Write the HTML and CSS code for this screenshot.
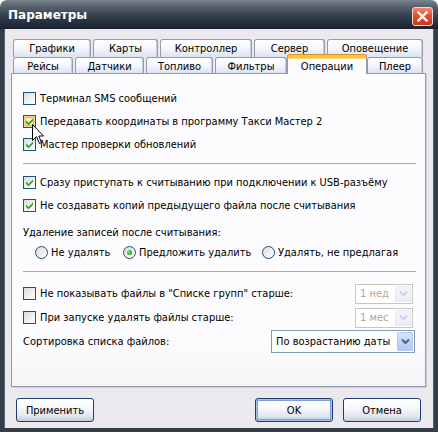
FILE: index.html
```html
<!DOCTYPE html>
<html>
<head>
<meta charset="utf-8">
<link rel="stylesheet" href="styles.css">
</head>
<body>
<div class="window">
  <div class="titlebar">
    <span class="title">Параметры</span>
    <div class="close">
      <svg width="11" height="11" viewBox="0 0 11 11"><path d="M1.5 1.5 L9.5 9.5 M9.5 1.5 L1.5 9.5" stroke="#fff" stroke-width="2.4" stroke-linecap="square"/></svg>
    </div>
  </div>
  <div class="client">
    <div class="tabs">
      <div class="tabrow back">
        <div class="tab t1">Графики</div>
        <div class="tab t2">Карты</div>
        <div class="tab t3">Контроллер</div>
        <div class="tab t4">Сервер</div>
        <div class="tab t5">Оповещение</div>
      </div>
      <div class="tabrow front">
        <div class="tab f1">Рейсы</div>
        <div class="tab f2">Датчики</div>
        <div class="tab f3">Топливо</div>
        <div class="tab f4">Фильтры</div>
        <div class="tab f5 selected">Операции</div>
        <div class="tab f6">Плеер</div>
      </div>
    </div>
    <div class="panel">
      <div class="row first"><span class="cb"></span><span class="lbl">Терминал SMS сообщений</span></div>
      <div class="row"><span class="cb checked hover"><svg width="9" height="9" viewBox="0 0 9 9"><path d="M1 3.5 L3.5 6 L8 1.5 L8 3.8 L3.5 8.2 L1 5.7 Z" fill="#21a121"/></svg></span><span class="lbl">Передавать координаты в программу Такси Мастер 2</span></div>
      <div class="row"><span class="cb checked"><svg width="9" height="9" viewBox="0 0 9 9"><path d="M1 3.5 L3.5 6 L8 1.5 L8 3.8 L3.5 8.2 L1 5.7 Z" fill="#21a121"/></svg></span><span class="lbl">Мастер проверки обновлений</span></div>
      <div class="sep s1"></div>
      <div class="row r4"><span class="cb checked"><svg width="9" height="9" viewBox="0 0 9 9"><path d="M1 3.5 L3.5 6 L8 1.5 L8 3.8 L3.5 8.2 L1 5.7 Z" fill="#21a121"/></svg></span><span class="lbl">Сразу приступать к считыванию при подключении к USB-разъёму</span></div>
      <div class="row"><span class="cb checked"><svg width="9" height="9" viewBox="0 0 9 9"><path d="M1 3.5 L3.5 6 L8 1.5 L8 3.8 L3.5 8.2 L1 5.7 Z" fill="#21a121"/></svg></span><span class="lbl">Не создавать копий предыдущего файла после считывания</span></div>
      <div class="label-row">Удаление записей после считывания:</div>
      <div class="radio-row">
        <div class="ropt o1"><span class="rb"></span><span class="lbl">Не удалять</span></div>
        <div class="ropt o2"><span class="rb on"><span class="dot"></span></span><span class="lbl">Предложить удалить</span></div>
        <div class="ropt o3"><span class="rb"></span><span class="lbl">Удалять, не предлагая</span></div>
      </div>
      <div class="sep s2"></div>
      <div class="row r6"><span class="cb"></span><span class="lbl grow">Не показывать файлы в "Списке групп" старше:</span>
        <div class="combo disabled small"><span class="val">1 нед</span><span class="drop"><svg width="9" height="7" viewBox="0 0 9 7"><path d="M1 1.5 L4.5 5 L8 1.5" fill="none" stroke="#c9d2e4" stroke-width="2"/></svg></span></div>
      </div>
      <div class="row r7"><span class="cb"></span><span class="lbl grow">При запуске удалять файлы старше:</span>
        <div class="combo disabled small"><span class="val">1 мес</span><span class="drop"><svg width="9" height="7" viewBox="0 0 9 7"><path d="M1 1.5 L4.5 5 L8 1.5" fill="none" stroke="#c9d2e4" stroke-width="2"/></svg></span></div>
      </div>
      <div class="row r8"><span class="lbl grow">Сортировка списка файлов:</span>
        <div class="combo sort"><span class="val">По возрастанию даты</span><span class="drop"><svg width="9" height="7" viewBox="0 0 9 7"><path d="M1 1.5 L4.5 5 L8 1.5" fill="none" stroke="#4d6185" stroke-width="2"/></svg></span></div>
      </div>
    </div>
    <div class="buttons">
      <div class="btn">Применить</div>
      <div class="spacer"></div>
      <div class="btn default">OK</div>
      <div class="btn">Отмена</div>
    </div>
  </div>
  <svg class="cursor" width="13" height="21" viewBox="0 0 13 21"><path d="M0.5 0.5 L0.5 16.5 L4.5 12.5 L7.5 19.5 L9.5 18.5 L6.8 12 L11.5 12 Z" fill="#fff" stroke="#000" stroke-width="1"/></svg>
</div>
</body>
</html>
```
FILE: styles.css
```css
html, body {
  margin: 0;
  padding: 0;
  background: #fff;
}
body {
  font-family: "DejaVu Sans Condensed", "DejaVu Sans", sans-serif;
  font-size: 11px;
  color: #000;
}
.window {
  position: relative;
  width: 438px;
  height: 432px;
  display: flex;
  flex-direction: column;
}
.titlebar {
  height: 29px;
  flex: none;
  display: flex;
  align-items: center;
  justify-content: space-between;
  padding: 0 5px 0 8px;
  box-sizing: border-box;
  border-radius: 7px 7px 0 0;
  background: linear-gradient(#7b858f 0, #5c6672 20%, #3a4451 50%, #252e3c 80%, #1a212e 100%);
}
.title {
  color: #fff;
  font-family: "DejaVu Sans", sans-serif;
  font-weight: bold;
  font-size: 12px;
  margin-top: 1px;
}
.close {
  width: 21px;
  height: 19px;
  box-sizing: border-box;
  margin-top: 3px;
  border: 1px solid #f3d8d0;
  border-radius: 3px;
  background: linear-gradient(#f08a6c, #e0512f 45%, #c9381c);
  display: flex;
  align-items: center;
  justify-content: center;
}
.close svg { display: block; }
.client {
  flex: 1;
  background: #ebe9ed;
  border-left: 4px solid #343c46;
  border-right: 4px solid #343c46;
  border-bottom: 4px solid #343c46;
  box-shadow: inset 1px 0 0 #5c6470, inset -1px 0 0 #5c6470;
  padding: 10px 9px 0 7px;
  display: flex;
  flex-direction: column;
}
.tabs {
  height: 34px;
  flex: none;
  display: flex;
  flex-direction: column;
  position: relative;
  z-index: 2;
}
.tabrow {
  display: flex;
  gap: 2px;
  margin-left: 2px;
  align-items: flex-start;
}
.tabrow.back { height: 18px; }
.tabrow.front { height: 16px; }
.tab {
  box-sizing: border-box;
  border: 1px solid #939cae;
  border-bottom: none;
  border-radius: 3px 3px 0 0;
  background: linear-gradient(#ffffff, #f6f8fc 45%, #dbe3f2);
  box-shadow: inset -1px 0 0 #c3cede;
  display: flex;
  align-items: center;
  justify-content: center;
  white-space: nowrap;
}
.back .tab { height: 18px; padding-bottom: 1px; }
.front .tab { height: 16px; padding-top: 1px; }
.t1 { width: 78px; }
.t2 { width: 65px; }
.t3 { width: 92px; }
.t4 { width: 71px; }
.t5 { width: 96px; }
.f1 { width: 60px; }
.f2 { width: 69px; }
.f3 { width: 67px; }
.f4 { width: 72px; }
.f5 { width: 76px; }
.f6 { width: 56px; }
.front .tab.selected {
  position: relative;
  z-index: 3;
  width: 80px;
  height: 19px;
  margin: -2px -2px 0 -2px;
  padding-top: 1px;
  background: #fcfcfe;
  border-top: 3px solid #ffc73c;
  box-shadow: inset 0 1px 0 #ffd97a, 0 -1px 0 #e68b2c;
}
.front .tab.f6 { margin-left: 0; }
.panel {
  width: 415px;
  height: 314px;
  box-sizing: border-box;
  flex: none;
  border: 1px solid #939cae;
  background: linear-gradient(#fcfcfe 0, #fcfcfe 85%, #f5f5f8 100%);
  box-shadow: 1px 1px 0 #c9cdd4;
  padding: 13px 10px 0 11px;
  display: flex;
  flex-direction: column;
}
.row {
  height: 23px;
  display: flex;
  align-items: center;
  flex: none;
}
.lbl { white-space: nowrap; }
.grow { flex: 1; }
.cb {
  width: 13px;
  height: 13px;
  box-sizing: border-box;
  border: 1px solid #1c5180;
  background: linear-gradient(135deg, #dcdcd7 0%, #f6f6f4 70%, #ffffff 100%);
  margin-right: 4px;
  flex: none;
  display: flex;
  align-items: center;
  justify-content: center;
}
.cb.hover {
  box-shadow: inset 0 0 0 1px #fbd88a, inset 0 0 0 2px #f5b547;
  background: linear-gradient(135deg, #fde9b8, #fff4d8);
}
.cb svg { display: block; }
.sep {
  height: 0;
  border-top: 1px solid #a9a8ad;
  margin-right: -1px;
  flex: none;
}
.s1 { margin-top: 7px; }
.r4 { margin-top: 7px; }
.label-row {
  height: 17px;
  margin-top: 7px;
  display: flex;
  align-items: center;
  flex: none;
}
.radio-row {
  height: 22px;
  display: flex;
  align-items: center;
  padding-left: 12px;
  flex: none;
}
.ropt { display: flex; align-items: center; }
.o1 { width: 88px; }
.o2 { width: 139px; }
.rb {
  width: 13px;
  height: 13px;
  box-sizing: border-box;
  border-radius: 50%;
  border: 1px solid #1c5180;
  background: linear-gradient(135deg, #dcdcd7 0%, #f4f4f2 70%, #ffffff 100%);
  margin-right: 3px;
  flex: none;
  display: flex;
  align-items: center;
  justify-content: center;
}
.dot {
  width: 5px;
  height: 5px;
  border-radius: 50%;
  background: radial-gradient(circle at 40% 40%, #8fe28f, #21a121 70%);
}
.s2 { margin-top: 8px; }
.r6 { margin-top: 10px; }
.r7 { margin-top: 1px; }
.r8 { margin-top: 1px; }
.combo {
  box-sizing: border-box;
  border: 1px solid #7f9db9;
  background: #fff;
  display: flex;
  align-items: center;
  padding: 1px;
}
.combo .val { flex: 1; padding-left: 3px; white-space: nowrap; }
.combo .drop {
  width: 16px;
  align-self: stretch;
  box-sizing: border-box;
  border: 1px solid #b6c8ef;
  border-radius: 1px;
  background: linear-gradient(#d9e4fb, #c2d3f8 60%, #b3c7f3);
  display: flex;
  align-items: center;
  justify-content: center;
}
.combo .drop svg { display: block; }
.combo.small { width: 58px; height: 20px; margin-right: 2px; }
.combo.disabled { border-color: #c9c7ba; }
.combo.disabled .val { color: #aca899; }
.combo.disabled .drop {
  border-color: #e4e9f4;
  background: linear-gradient(#f3f5fb, #e8edf7);
}
.combo.sort { width: 144px; height: 23px; }
.buttons {
  display: flex;
  margin-top: 11px;
  padding: 0 4px 0 5px;
  gap: 10px;
}
.spacer { flex: 1; }
.btn {
  width: 78px;
  height: 24px;
  box-sizing: border-box;
  border: 1px solid #1f3c6c;
  border-radius: 3px;
  background: linear-gradient(#ffffff 0, #f7f8fb 40%, #e3e8f1 75%, #c3cde0 100%);
  display: flex;
  align-items: center;
  justify-content: center;
}
.btn.default {
  box-shadow: inset 0 0 0 1px #a9c0ec, inset 0 0 0 2px #7d9de0;
}
.cursor {
  position: absolute;
  left: 32px;
  top: 124px;
  z-index: 10;
}
```
